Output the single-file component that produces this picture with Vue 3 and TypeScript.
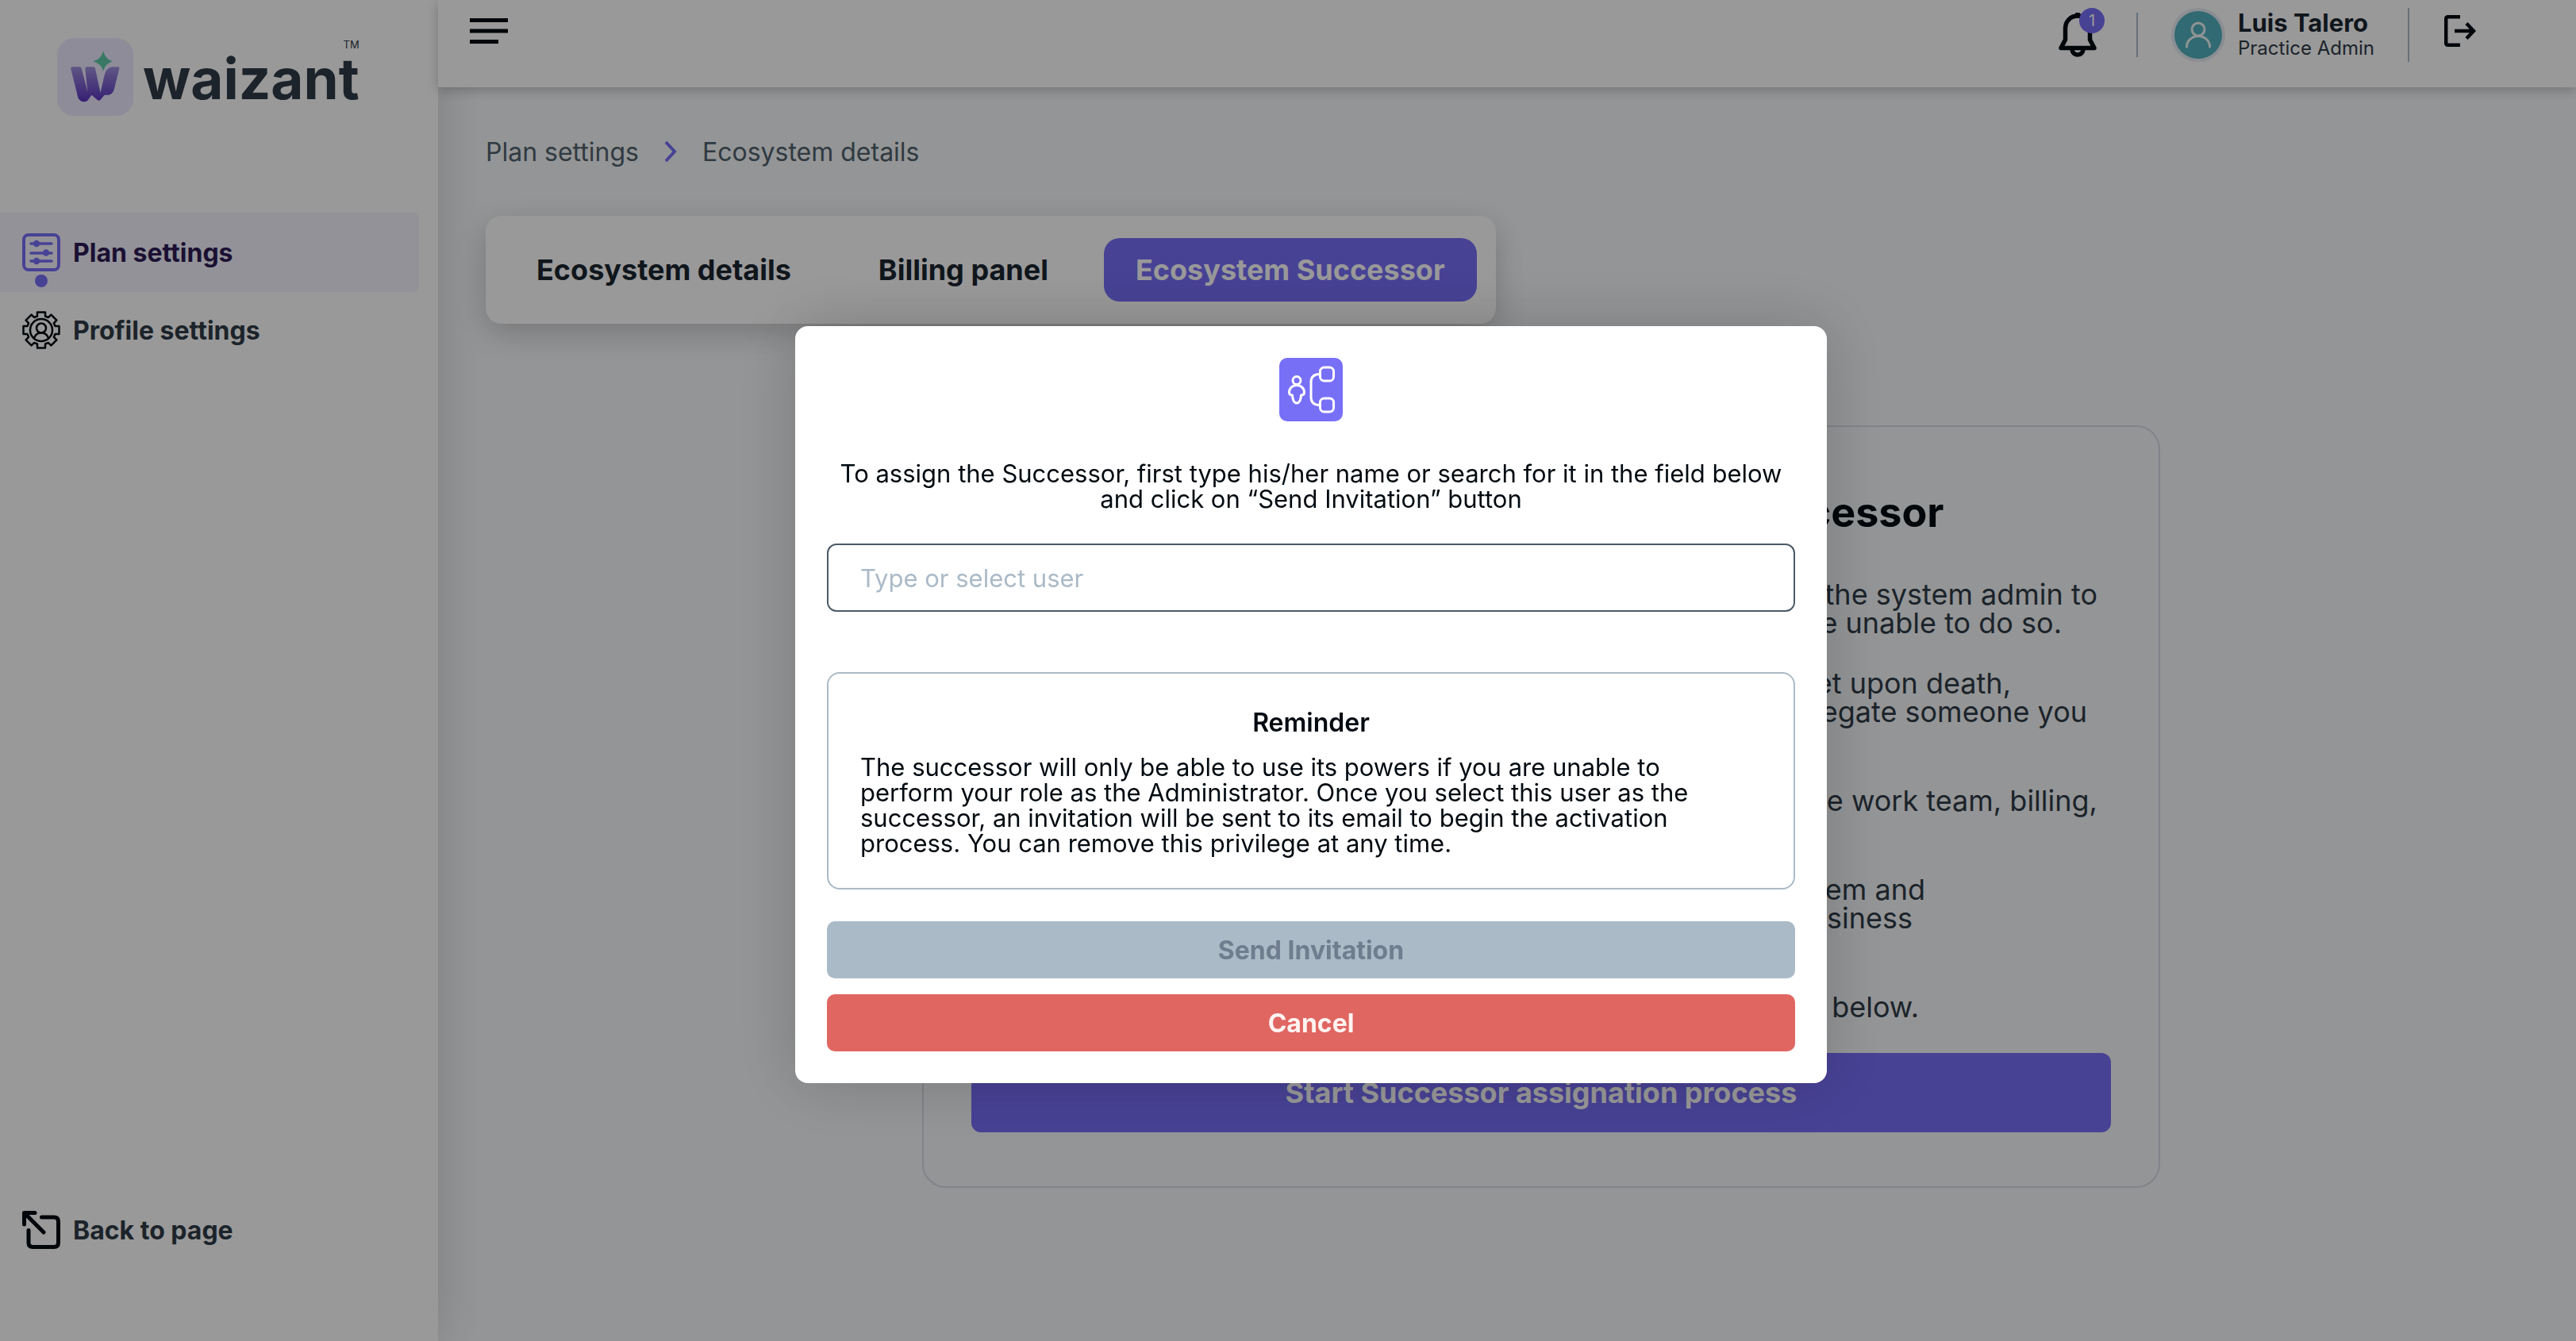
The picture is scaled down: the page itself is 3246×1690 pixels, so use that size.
<script setup lang="ts">
import { ref } from 'vue'

interface Line {
  text: string
  width: number
}

const user = ref('')
const tabs = ['Ecosystem details', 'Billing panel', 'Ecosystem Successor']
const activeTab = ref('Ecosystem Successor')

// Each paragraph keeps its own line breaks; width is where the line ends in the column.
const paragraphs: Line[][] = [
  [
    { text: 'The Successor is the person chosen by the system admin to', width: 1419 },
    { text: 'perform the role when you are unable to do so.', width: 1374 },
  ],
  [
    { text: 'The powers can be set upon death,', width: 1310 },
    { text: 'incapacity or absence, so delegate someone you', width: 1406 },
    { text: 'trust.', width: 700 },
  ],
  [
    { text: 'The Successor will manage the work team, billing,', width: 1419 },
    { text: 'and settings.', width: 700 },
  ],
  [
    { text: 'This keeps the ecosystem and', width: 1202 },
    { text: 'all of its business', width: 1186 },
    { text: 'running.', width: 700 },
  ],
  [{ text: 'To begin, click the button below.', width: 1194 }],
]
</script>

<template>
  <div class="app">
    <aside class="sidebar">
      <div class="brand">
        <svg class="brand-mark" viewBox="0 0 95 97" aria-hidden="true">
          <defs>
            <linearGradient id="wfill" x1="0" y1="0" x2="0" y2="1">
              <stop offset="0" stop-color="#9f90dc" />
              <stop offset="1" stop-color="#5a35c0" />
            </linearGradient>
          </defs>
          <rect width="95" height="97" rx="21" fill="#edeaff" />
          <path
            fill="url(#wfill)"
            d="M17 38q0-2 2-2h9q2 0 2.500 2L38 67L35 38q0-2 2-2h8q2 0 2.500 2L54 68L59 46q2-9 10-10h7q2 0 1.500 2L71 64q-2 7-9 7h-3L54 77q-2 2-4 0L43 71L38 78q-5 3-9 0q-2-1-3-4z"
          />
          <path fill="#5fc9a8" d="M57.500 16Q60 26 69 29Q60 32 57.500 41Q55 32 45 29Q55 26 57.500 16z" />
        </svg>
        <div class="brand-text">
          <small>TM</small>
          <span class="brand-name">waizant</span>
        </div>
      </div>

      <nav class="nav">
        <a href="#plan" class="nav-item active">
          <span class="nav-icon">
            <svg viewBox="0 0 48 48" fill="none" stroke="currentColor" aria-hidden="true">
              <rect x="2" y="2" width="44" height="44" rx="6" stroke-width="4" />
              <g stroke-width="3.500" stroke-linecap="round">
                <path d="M11 13h26M11 25h26M11 35h26" />
                <circle cx="18" cy="13" r="2.500" />
                <circle cx="30" cy="24.500" r="2.500" />
                <circle cx="18" cy="35" r="2.500" />
              </g>
            </svg>
            <i class="dot"></i>
          </span>
          Plan settings
        </a>
        <a href="#profile" class="nav-item">
          <span class="nav-icon ink">
            <svg viewBox="0 0 48 48" fill="none" stroke="currentColor" stroke-width="2.500" stroke-linejoin="round" aria-hidden="true">
              <path d="M19 6.500V1.500H29V6.500L32.800 8.100L36.400 4.600L43.400 11.600L39.900 15.200L41.500 19H46.500V29H41.500L39.900 32.800L43.400 36.400L36.400 43.400L32.800 39.900L29 41.500V46.500H19V41.500L15.200 39.900L11.600 43.400L4.600 36.400L8.100 32.800L6.500 29H1.500V19H6.500L8.100 15.200L4.600 11.600L11.600 4.600L15.200 8.100Z" />
              <circle cx="24" cy="24" r="14" />
              <circle cx="24" cy="21.500" r="6" />
              <path d="M15 34a9.500 9.500 0 0 1 18 0" />
            </svg>
          </span>
          Profile settings
        </a>
      </nav>

      <a href="#back" class="nav-item back">
        <span class="nav-icon ink">
          <svg viewBox="0 0 48 48" fill="none" stroke="currentColor" stroke-width="5" stroke-linecap="round" stroke-linejoin="round" aria-hidden="true">
            <path d="M2.500 17V2.500H16M3 3L27 27M24.500 8H40q5.500 0 5.500 5.500V40q0 5.500-5.500 5.500H13.500Q8 45.500 8 40V24.500" />
          </svg>
        </span>
        Back to page
      </a>
    </aside>

    <div class="page">
      <header class="topbar">
        <button class="icon-button" type="button" aria-label="Menu">
          <svg width="48" height="32" viewBox="0 0 48 32" aria-hidden="true">
            <path d="M0 2.500h48M0 16h48M0 29.500h36" stroke="#000a10" stroke-width="5" />
          </svg>
        </button>
        <div class="top-actions">
          <button class="icon-button bell" type="button" aria-label="Notifications">
            <svg width="48" height="56" viewBox="0 0 48 56" fill="none" stroke="#000a10" stroke-width="5.500" stroke-linejoin="round" aria-hidden="true">
              <path d="M24 4C15 4 8.500 11 8.500 20v14L3 44.500h42L39.500 34V20C39.500 11 33 4 24 4z" />
              <path d="M17 46a7 7 0 0 0 14 0M24 0v4" />
            </svg>
            <span class="badge">1</span>
          </button>
          <i class="rule"></i>
          <div class="user">
            <svg width="68" height="68" viewBox="0 0 68 68" fill="none" aria-hidden="true">
              <circle cx="34" cy="34" r="34" fill="#e6edf4" />
              <circle cx="34" cy="34" r="30" fill="#52b1be" />
              <g stroke="#eef6f7" stroke-width="3" stroke-linecap="round">
                <circle cx="34" cy="27" r="8" />
                <path d="M19.500 49a14.500 13.500 0 0 1 29 0" />
              </g>
            </svg>
            <div class="user-text">
              <strong>Luis Talero</strong>
              <span>Practice Admin</span>
            </div>
          </div>
          <i class="rule tall"></i>
          <button class="icon-button logout" type="button" aria-label="Log out">
            <svg width="40" height="40" viewBox="0 0 40 40" fill="none" stroke="#000a10" stroke-width="4.500" aria-hidden="true">
              <path d="M20 2.200H5q-2.800 0-2.800 2.800v30q0 2.800 2.800 2.800H20" />
              <path d="M13 20h24M28 10.500L37 20L28 29.500" />
            </svg>
          </button>
        </div>
      </header>

      <main class="content">
        <nav class="crumbs" aria-label="Breadcrumb">
          <a href="#plan">Plan settings</a>
          <svg width="18" height="28" viewBox="0 0 18 28" fill="none" stroke="#786ef8" stroke-width="4" aria-hidden="true">
            <path d="M3 2L14 14L3 26" />
          </svg>
          <a href="#details">Ecosystem details</a>
        </nav>

        <div class="tabs">
          <button
            v-for="tab in tabs"
            :key="tab"
            type="button"
            class="tab"
            :class="{ active: tab === activeTab }"
            @click="activeTab = tab"
          >
            {{ tab }}
          </button>
        </div>

        <div class="card-row">
          <section class="card">
            <h1>How to Assign an Ecosystem Successor</h1>
            <p v-for="(lines, i) in paragraphs" :key="i">
              <span v-for="line in lines" :key="line.text" class="line" :style="{ width: line.width + 'px' }">{{ line.text }}</span>
            </p>
            <button class="start" type="button">Start Successor assignation process</button>
          </section>
        </div>
      </main>
    </div>

    <div class="overlay">
      <form class="modal" role="dialog" aria-label="Assign successor" @submit.prevent>
        <svg class="modal-icon" viewBox="0 0 80 80" fill="none" stroke="#fff" stroke-width="3" aria-hidden="true">
          <rect width="80" height="80" rx="10" fill="#786ff7" stroke="none" />
          <circle cx="22" cy="28.500" r="5" />
          <path stroke-linejoin="round" d="M22 34.500c-5.500 0-9.500 4-9.500 9c0 2.500 1.500 3.500 4 3.500c0 5 2 10 5.500 10s5.500-5 5.500-10c2.500 0 4-1 4-3.500c0-5-4-9-9.500-9z" />
          <rect x="51.500" y="12" width="17" height="17" rx="5" />
          <rect x="51.500" y="51" width="17" height="17" rx="5" />
          <path d="M51 20.500c-7 0-11 3-11 10v19c0 7 4 10 11 10" />
        </svg>
        <label for="successor">
          To assign the Successor, first type his/her name or search for it in the field below<br />
          and click on “Send Invitation” button
        </label>
        <input id="successor" v-model="user" type="text" placeholder="Type or select user" />
        <div class="reminder">
          <h2>Reminder</h2>
          <p>
            The successor will only be able to use its powers if you are unable to<br />
            perform your role as the Administrator. Once you select this user as the<br />
            successor, an invitation will be sent to its email to begin the activation<br />
            process. You can remove this privilege at any time.
          </p>
        </div>
        <button class="send" type="submit" disabled>Send Invitation</button>
        <button class="cancel" type="button">Cancel</button>
      </form>
    </div>
  </div>
</template>

<style>
body {
  background: #f7f9fb;
}
</style>

<style scoped>
.app {
  display: flex;
  min-height: 100vh;
  font-family: Inter, "Liberation Sans", sans-serif;
  font-size: 31px;
  color: #2f3b47;
}
.app *,
.app {
  box-sizing: border-box;
}
button,
input {
  font: inherit;
  color: inherit;
  border: 0;
  background: none;
  padding: 0;
  margin: 0;
}
a {
  color: inherit;
  text-decoration: none;
}
svg {
  display: block;
}
.sidebar {
  display: flex;
  flex-direction: column;
  flex: none;
  width: 552px;
  background: #fff;
  box-shadow: 0 0 60px rgba(0, 0, 0, 0.16);
  z-index: 1;
}
.brand {
  display: flex;
  align-items: center;
  gap: 12px;
  height: 98px;
  margin: 48px 72px 122px;
}
.brand-mark {
  flex: none;
  width: 96px;
  height: 98px;
}
.brand-text {
  display: flex;
  flex-direction: column;
  padding-bottom: 12px;
}
.brand-name {
  font-size: 71px;
  line-height: 70px;
  font-weight: 700;
}
.brand-text small {
  font-size: 13px;
  line-height: 16px;
  text-align: right;
}
.nav-item {
  display: flex;
  align-items: center;
  gap: 16px;
  height: 100px;
  margin-right: 24px;
  padding-left: 28px;
  font-size: 32px;
  font-weight: 700;
}
.nav .nav-item + .nav-item {
  height: 96px;
}
.nav-item.active {
  color: #2d1b55;
  background: #f7f3ff;
  border-radius: 0 8px 8px 0;
}
.nav-icon {
  position: relative;
  width: 48px;
  height: 48px;
  color: #786ef8;
}
.nav-icon.ink {
  color: #000a10;
}
.dot {
  position: absolute;
  left: 16px;
  top: 52px;
  width: 16px;
  height: 16px;
  border-radius: 50%;
  background: #786ef8;
}
.back {
  margin-top: auto;
  margin-bottom: 90px;
}
.page {
  flex: 1;
  min-width: 0;
}
.topbar {
  position: relative;
  z-index: 2;
  display: flex;
  align-items: flex-start;
  justify-content: space-between;
  height: 110px;
  padding: 10px 126px 0 40px;
  background: #fff;
  box-shadow: 0 4px 14px rgba(0, 0, 0, 0.22);
}
.topbar > .icon-button {
  padding-top: 13px;
}
.top-actions {
  display: flex;
  align-items: center;
}
.bell {
  position: relative;
}
.badge {
  position: absolute;
  right: -10px;
  top: -6px;
  width: 32px;
  height: 32px;
  border-radius: 50%;
  background: #786ef8;
  color: #fff;
  font-size: 20px;
  line-height: 32px;
  text-align: center;
}
.rule {
  width: 2px;
  height: 56px;
  margin: 0 42px 0 50px;
  background: #abbbc8;
}
.rule.tall {
  height: 68px;
  margin: 0 44px 0 40px;
}
.logout {
  margin-top: -10px;
}
.user {
  display: flex;
  align-items: center;
  gap: 16px;
}
.user-text {
  display: flex;
  flex-direction: column;
  width: 174px;
  white-space: nowrap;
}
.user-text strong {
  font-size: 31px;
  line-height: 34px;
  font-weight: 700;
  color: #19252f;
}
.user-text span {
  font-size: 24px;
  line-height: 30px;
}
.content {
  padding: 60px;
}
.crumbs {
  display: flex;
  align-items: center;
  gap: 31px;
  height: 42px;
  font-size: 32px;
  color: #50616d;
}
.tabs {
  display: inline-flex;
  align-items: center;
  margin-top: 60px;
  padding: 28px 24px;
  gap: 30px;
  border-radius: 20px;
  background: #fff;
  box-shadow: 0 12px 40px rgba(0, 0, 0, 0.2);
}
.tab {
  height: 80px;
  padding: 0 40px;
  border-radius: 20px;
  font-size: 36px;
  font-weight: 700;
  color: #19252f;
}
.tab.active {
  background: #786ef8;
  color: #fff;
}
.card-row {
  padding-left: 86px;
}
.card {
  width: 1560px;
  margin: 128px auto 0;
  padding: 60px 60px 68px;
  border: 2px solid #d9dbe4;
  border-radius: 30px;
}
.card h1 {
  margin: 12px 0 49px;
  font-size: 52px;
  line-height: 72px;
  font-weight: 700;
  text-align: center;
  color: #000a10;
}
.card p {
  margin: 0 0 40px;
  font-size: 36px;
  line-height: 36px;
}
.line {
  display: block;
  text-align: right;
  white-space: nowrap;
}
.start {
  width: 100%;
  height: 100px;
  border-radius: 12px;
  background: #786ef8;
  color: #fff;
  font-size: 36px;
  font-weight: 700;
}
.overlay {
  position: fixed;
  inset: 0;
  z-index: 10;
  display: flex;
  justify-content: center;
  align-items: flex-start;
  padding: 411px 0 0 58px;
  background: rgba(0, 0, 0, 0.4);
}
.modal {
  display: flex;
  flex-direction: column;
  width: 1300px;
  padding: 40px;
  border-radius: 16px;
  background: #fff;
  color: #000a10;
  box-shadow: 0 0 80px rgba(0, 0, 0, 0.2);
}
.modal-icon {
  width: 80px;
  height: 80px;
  margin: 0 auto 50px;
}
.modal label {
  line-height: 32px;
  text-align: center;
  white-space: nowrap;
}
.modal input {
  height: 86px;
  margin: 40px 0 76px;
  padding: 0 40px;
  border: 2px solid #4b5a66;
  border-radius: 12px;
}
.modal input::placeholder {
  color: #abbac7;
  opacity: 1;
}
.reminder {
  padding: 46px 40px 40px;
  border: 2px solid #abbac7;
  border-radius: 16px;
}
.reminder h2 {
  margin: 0 0 24px;
  font-size: 32px;
  line-height: 32px;
  font-weight: 600;
  text-align: center;
}
.reminder p {
  margin: 0;
  line-height: 32px;
  white-space: nowrap;
}
.send,
.cancel {
  height: 72px;
  border-radius: 10px;
  font-size: 32px;
  font-weight: 700;
}
.send {
  margin: 40px 0 20px;
  background: #abbac7;
  color: #6f7d8e;
}
.cancel {
  background: #e06662;
  color: #fff3f1;
}
</style>
